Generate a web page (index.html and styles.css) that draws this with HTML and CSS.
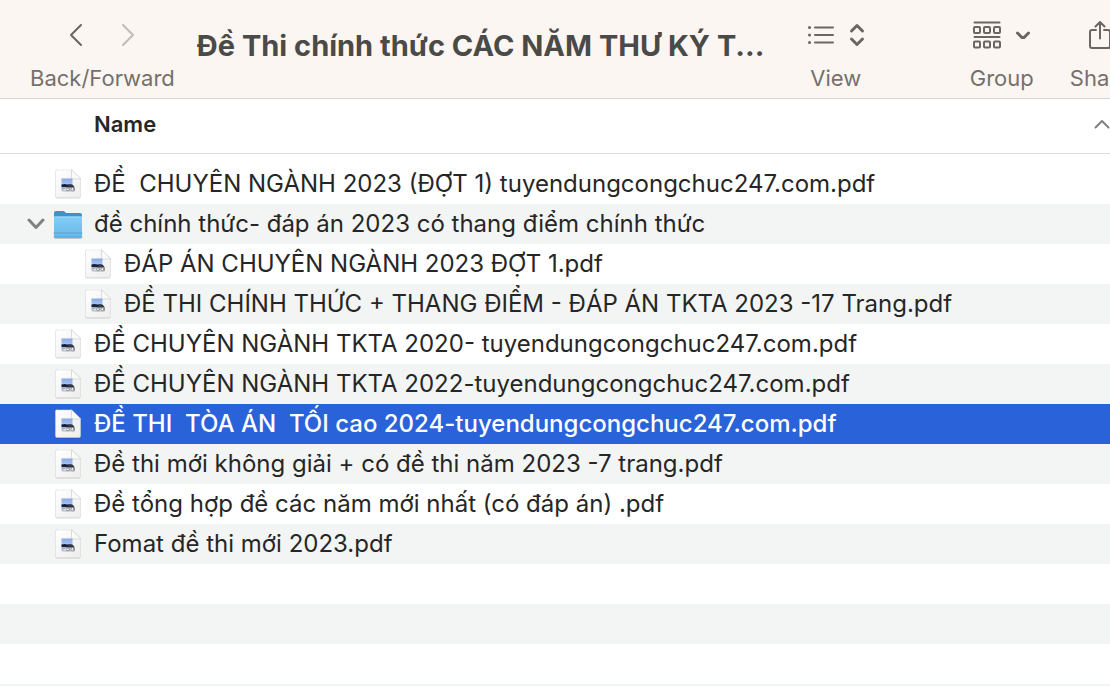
FILE: index.html
```html
<!DOCTYPE html>
<html lang="vi">
<head>
  <meta charset="UTF-8" />
  <meta name="viewport" content="width=device-width, initial-scale=1.0" />
  <title>Đề Thi chính thức</title>
  <link rel="stylesheet" href="styles.css">
</head>
<body>
  <!-- shared icons -->
  <svg class="sprite" aria-hidden="true">
    <defs>
      <linearGradient id="paper" x1="0" y1="0" x2="1" y2="1">
        <stop offset="0" stop-color="#fff" />
        <stop offset="1" stop-color="#ededed" />
      </linearGradient>
      <linearGradient id="sky" x1="0" y1="0" x2="0" y2="1">
        <stop offset="0" stop-color="#86a9e6" />
        <stop offset="1" stop-color="#c3d6f5" />
      </linearGradient>
      <linearGradient id="blue" x1="0" y1="0" x2="0" y2="1">
        <stop offset="0" stop-color="#83cdf7" />
        <stop offset="1" stop-color="#69b7ea" />
      </linearGradient>
      <symbol id="pdf" viewBox="0 0 30 32">
        <path d="M3.500 2.500H18.500L27.500 11.500V29Q27.500 30.500 26 30.500H4Q2.500 30.500 2.500 29V3.500Q2.500 2.500 3.500 2.500Z" fill="#000" opacity=".16" />
        <path d="M3.500 2H18.500L27.500 11V28Q27.500 29.500 26 29.500H4Q2.500 29.500 2.500 28V3Q2.500 2 3.500 2Z" fill="url(#paper)" stroke="#dcdcdc" stroke-width=".5" />
        <path d="M18.500 2V9.500Q18.500 11 20 11H27.500Z" fill="#fafafa" stroke="#cfcfcf" stroke-width=".7" />
        <rect x="8.500" y="10.500" width="11" height="10" fill="url(#sky)" />
        <path d="M8.500 16.500l3-.5 3 .6 2-.3 3 .2V19h-11z" fill="#15203c" />
        <path d="M8.500 19h5v2h-5z" fill="#a9b8d8" />
        <path d="M14 19l1.500-2h4.500l1.500 2v2h-7.500z" fill="#33373f" />
        <path d="M9 21.500l4-1.800 8.500-.2v3.500H10z" fill="#dfe2e6" stroke="#868a91" stroke-width=".6" />
        <circle cx="15" cy="21.300" r="1.500" fill="#f4f5f7" stroke="#6f757f" stroke-width=".7" />
        <circle cx="19.500" cy="21.300" r="1.500" fill="#f4f5f7" stroke="#6f757f" stroke-width=".7" />
      </symbol>
      <symbol id="folder" viewBox="0 0 30 32">
        <rect x="1" y="8" width="28" height="23" rx="2" fill="#000" opacity=".2" />
        <path d="M1 5Q1 3 3 3H10Q11 3 12 4L13 5H27Q29 5 29 7V12H1Z" fill="#3d92cb" />
        <path d="M1 10Q1 8.500 2.500 8.500H27.500Q29 8.500 29 10V28Q29 29.500 27.500 29.500H2.500Q1 29.500 1 28Z" fill="url(#blue)" />
        <path d="M1.500 9H28.500" stroke="#9bdcfb" />
        <path d="M1 25H29M1 29H29" stroke="#4a9fd6" stroke-width=".8" />
      </symbol>
    </defs>
  </svg>

  <header class="toolbar">
    <div class="tool nav">
      <div class="tool-icons">
        <button type="button" aria-label="Back">
          <svg width="14" height="24" viewBox="0 0 14 24"><path d="M12 2L2 12L12 22" /></svg>
        </button>
        <button type="button" aria-label="Forward" disabled>
          <svg width="14" height="24" viewBox="0 0 14 24"><path d="M2 2L12 12L2 22" /></svg>
        </button>
      </div>
      <span class="tool-label">Back/Forward</span>
    </div>

    <h1 class="title">Đề Thi chính thức CÁC NĂM THƯ KÝ T...</h1>

    <button type="button" class="tool view">
      <span class="tool-icons">
        <svg width="28" height="20" viewBox="0 0 28 20">
          <path d="M8 2.500H26M8 10H26M8 17.500H26" />
          <path class="dots" d="M2.500 2.500h.01M2.500 10h.01M2.500 17.500h.01" />
        </svg>
        <svg class="bold" width="16" height="24" viewBox="0 0 16 24"><path d="M2.500 8L8 2.500L13.500 8M2.500 16L8 21.500L13.500 16" /></svg>
      </span>
      <span class="tool-label">View</span>
    </button>

    <button type="button" class="tool group">
      <span class="tool-icons">
        <svg width="28" height="28" viewBox="0 0 28 28">
          <path d="M1.500 1.500H26.500M1.500 16H26.500" />
          <g class="cells">
            <rect x="1" y="6" width="6" height="6" rx="1" />
            <rect x="11" y="6" width="6" height="6" rx="1" />
            <rect x="21" y="6" width="6" height="6" rx="1" />
            <rect x="1" y="20.500" width="6" height="6" rx="1" />
            <rect x="11" y="20.500" width="6" height="6" rx="1" />
            <rect x="21" y="20.500" width="6" height="6" rx="1" />
          </g>
        </svg>
        <svg class="bold" width="16" height="8" viewBox="0 0 16 8"><path d="M2.500 2L8 7.500L13.500 2" /></svg>
      </span>
      <span class="tool-label">Group</span>
    </button>

    <button type="button" class="tool share">
      <span class="tool-icons">
        <svg width="24" height="30" viewBox="0 0 24 30">
          <path d="M8 10H4Q2 10 2 12V26Q2 28 4 28H20Q22 28 22 26V12Q22 10 20 10H16M12 18.500V2M7.500 6.500L12 2L16.500 6.500" />
        </svg>
      </span>
      <span class="tool-label">Share</span>
    </button>
  </header>

  <main class="list">
    <table class="files">
      <thead>
        <tr>
          <th aria-sort="ascending">
            <button type="button" class="sort">
              Name
              <svg width="16" height="10" viewBox="0 0 16 10"><path d="M1.500 8.500L8 2L14.500 8.500" /></svg>
            </button>
          </th>
        </tr>
      </thead>
      <tbody>
        <tr><td><div class="entry"><svg class="icon"><use href="#pdf" /></svg>ĐỀ  CHUYÊN NGÀNH 2023 (ĐỢT 1) tuyendungcongchuc247.com.pdf</div></td></tr>
        <tr><td><div class="entry folder"><button type="button" class="toggle" aria-label="Collapse" aria-expanded="true"><svg width="18" height="12" viewBox="0 0 18 12"><path d="M2 2L9 9.500L16 2" /></svg></button><svg class="icon"><use href="#folder" /></svg>đề chính thức- đáp án 2023 có thang điểm chính thức</div></td></tr>
        <tr><td><div class="entry nested"><svg class="icon"><use href="#pdf" /></svg>ĐÁP ÁN CHUYÊN NGÀNH 2023 ĐỢT 1.pdf</div></td></tr>
        <tr><td><div class="entry nested"><svg class="icon"><use href="#pdf" /></svg>ĐỀ THI CHÍNH THỨC + THANG ĐIỂM - ĐÁP ÁN TKTA 2023 -17 Trang.pdf</div></td></tr>
        <tr><td><div class="entry"><svg class="icon"><use href="#pdf" /></svg>ĐỀ CHUYÊN NGÀNH TKTA 2020- tuyendungcongchuc247.com.pdf</div></td></tr>
        <tr><td><div class="entry"><svg class="icon"><use href="#pdf" /></svg>ĐỀ CHUYÊN NGÀNH TKTA 2022-tuyendungcongchuc247.com.pdf</div></td></tr>
        <tr class="selected"><td><div class="entry"><svg class="icon"><use href="#pdf" /></svg>ĐỀ THI  TÒA ÁN  TỐI cao 2024-tuyendungcongchuc247.com.pdf</div></td></tr>
        <tr><td><div class="entry"><svg class="icon"><use href="#pdf" /></svg>Đề thi mới không giải + có đề thi năm 2023 -7 trang.pdf</div></td></tr>
        <tr><td><div class="entry"><svg class="icon"><use href="#pdf" /></svg>Đề tổng hợp đề các năm mới nhất (có đáp án) .pdf</div></td></tr>
        <tr><td><div class="entry"><svg class="icon"><use href="#pdf" /></svg>Fomat đề thi mới 2023.pdf</div></td></tr>
      </tbody>
    </table>
  </main>
</body>
</html>
```
FILE: styles.css
```css
* {
  box-sizing: border-box;
}
body {
  margin: 0;
  height: 100vh;
  display: flex;
  flex-direction: column;
  overflow: hidden;
  font-family: Inter, "Noto Sans", sans-serif;
  color: #262626;
  background-color: #fff;
}
button {
  padding: 0;
  border: none;
  background: none;
  font: inherit;
  color: inherit;
}
svg {
  flex: none;
  fill: none;
  stroke-linecap: round;
  stroke-linejoin: round;
}
.sprite {
  position: absolute;
  width: 0;
  height: 0;
}

/* toolbar */
.toolbar {
  display: flex;
  flex: none;
  padding: 15px 0 6px 30px;
  background-color: #fbf6f2;
  border-bottom: 1px solid #d6d3d1;
  color: #75706c;
  overflow: hidden;
}
.tool {
  display: flex;
  flex: none;
  flex-direction: column;
  align-items: center;
  gap: 9px;
}
.tool-icons {
  display: flex;
  align-items: center;
  justify-content: center;
  gap: 14px;
  height: 40px;
}
.tool-icons svg {
  display: block;
  stroke: #6b6662;
  stroke-width: 2;
}
.tool-icons .dots {
  stroke-width: 3;
}
.tool-icons .bold {
  stroke-width: 3;
}
.tool-label {
  font-size: 22px;
  line-height: 28px;
}
.nav .tool-icons {
  gap: 38px;
}
.nav button:disabled {
  opacity: 0.4;
}
.title {
  flex: 1;
  min-width: 0;
  margin: 13px 0 0 22px;
  font-size: 29px;
  line-height: 36px;
  font-weight: 700;
  color: #4a4a48;
  white-space: nowrap;
  overflow: hidden;
}
.view {
  width: 60px;
  margin-left: 30px;
}
.group {
  margin-left: 104px;
}
.share {
  margin: 0 -20px 0 36px;
}

/* file list */
.list {
  flex: 1;
  background: repeating-linear-gradient(#fff 0 40px, #f3f5f4 40px 80px) 0 65px / 100% 80px;
}
.files {
  width: 100%;
  border-collapse: separate;
  border-spacing: 0;
}
.files th {
  height: 55px;
  padding: 0;
  background-color: #fff;
  border-bottom: 1px solid #dcdcdc;
}
.sort {
  display: flex;
  align-items: center;
  justify-content: space-between;
  width: 100%;
  padding: 0 0 4px 94px;
  font-size: 22px;
  line-height: 28px;
  font-weight: 600;
}
.sort svg {
  stroke: #808080;
  stroke-width: 2;
}
.files tbody::before {
  content: "";
  display: block;
  height: 10px;
  background-color: #fff;
}
.files td {
  padding: 0;
}
.entry {
  display: flex;
  align-items: center;
  height: 40px;
  padding-left: 53px;
  font-size: 24px;
  line-height: 40px;
  white-space: pre;
}
.entry.nested {
  padding-left: 83px;
}
.entry.folder {
  padding-left: 27px;
}
.icon {
  width: 30px;
  height: 32px;
  margin-right: 11px;
}
.toggle {
  display: flex;
  width: 26px;
}
.toggle svg {
  stroke: #808080;
  stroke-width: 3;
}
.selected {
  background-color: #2962d9;
  color: #fff;
}
.selected .entry {
  font-weight: 500;
}
```
